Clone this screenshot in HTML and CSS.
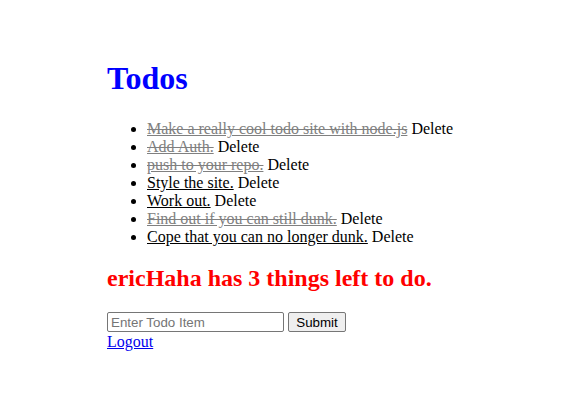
FILE: index.html
```html
<!DOCTYPE html>
<html>
<head>
<meta charset="utf-8">
<link rel="stylesheet" href="styles.css">
</head>
<body>
<div class="page">
  <h1 class="title">Todos</h1>
  <ul class="todos">
    <li><span class="item done">Make a really cool todo site with node.js</span> Delete</li>
    <li><span class="item done">Add Auth.</span> Delete</li>
    <li><span class="item done">push to your repo.</span> Delete</li>
    <li><span class="item">Style the site.</span> Delete</li>
    <li><span class="item">Work out.</span> Delete</li>
    <li><span class="item done">Find out if you can still dunk.</span> Delete</li>
    <li><span class="item">Cope that you can no longer dunk.</span> Delete</li>
  </ul>
  <h2 class="count">ericHaha has 3 things left to do.</h2>
  <form class="add-form">
    <input class="todo-input" type="text" placeholder="Enter Todo Item"> <button class="submit-btn" type="button">Submit</button>
  </form>
  <a class="logout" href="#">Logout</a>
</div>
</body>
</html>
```
FILE: styles.css
```css
body {
  margin: 8px;
  font-family: "Liberation Serif", "Times New Roman", serif;
  font-size: 16px;
  background: #fff;
}
.page {
  padding: 31px 0 0 99px;
}
.title {
  color: #0000ff;
  font-size: 32px;
  margin: 21px 0 23px;
}
.todos {
  margin: 16px 0;
  padding-left: 40px;
  line-height: 18px;
}
.item {
  color: #000;
  text-decoration: underline;
}
.item.done {
  color: #808080;
  text-decoration: underline line-through;
}
.count {
  color: #ff0000;
  font-size: 24px;
  margin: 19px 0 20px;
}
.add-form {
  margin: 0;
  display: flex;
  align-items: center;
  gap: 4px;
}
.todo-input {
  font-family: "Liberation Sans", Arial, sans-serif;
  font-size: 13.33px;
  width: 177px;
  height: 20px;
  padding: 1px 3px;
  border: 1px solid #767676;
  border-radius: 2px;
  box-sizing: border-box;
  margin: 0;
}
.todo-input::placeholder {
  color: #757575;
}
.submit-btn {
  font-family: "Liberation Sans", Arial, sans-serif;
  font-size: 13.33px;
  width: 58px;
  height: 20px;
  padding: 0;
  border: 1px solid #767676;
  border-radius: 2px;
  background: #efefef;
  color: #000;
  margin: 0;
  box-sizing: border-box;
}
.logout {
  display: inline-block;
  margin-top: 1px;
  color: #0000ee;
  text-decoration: underline;
}
```
